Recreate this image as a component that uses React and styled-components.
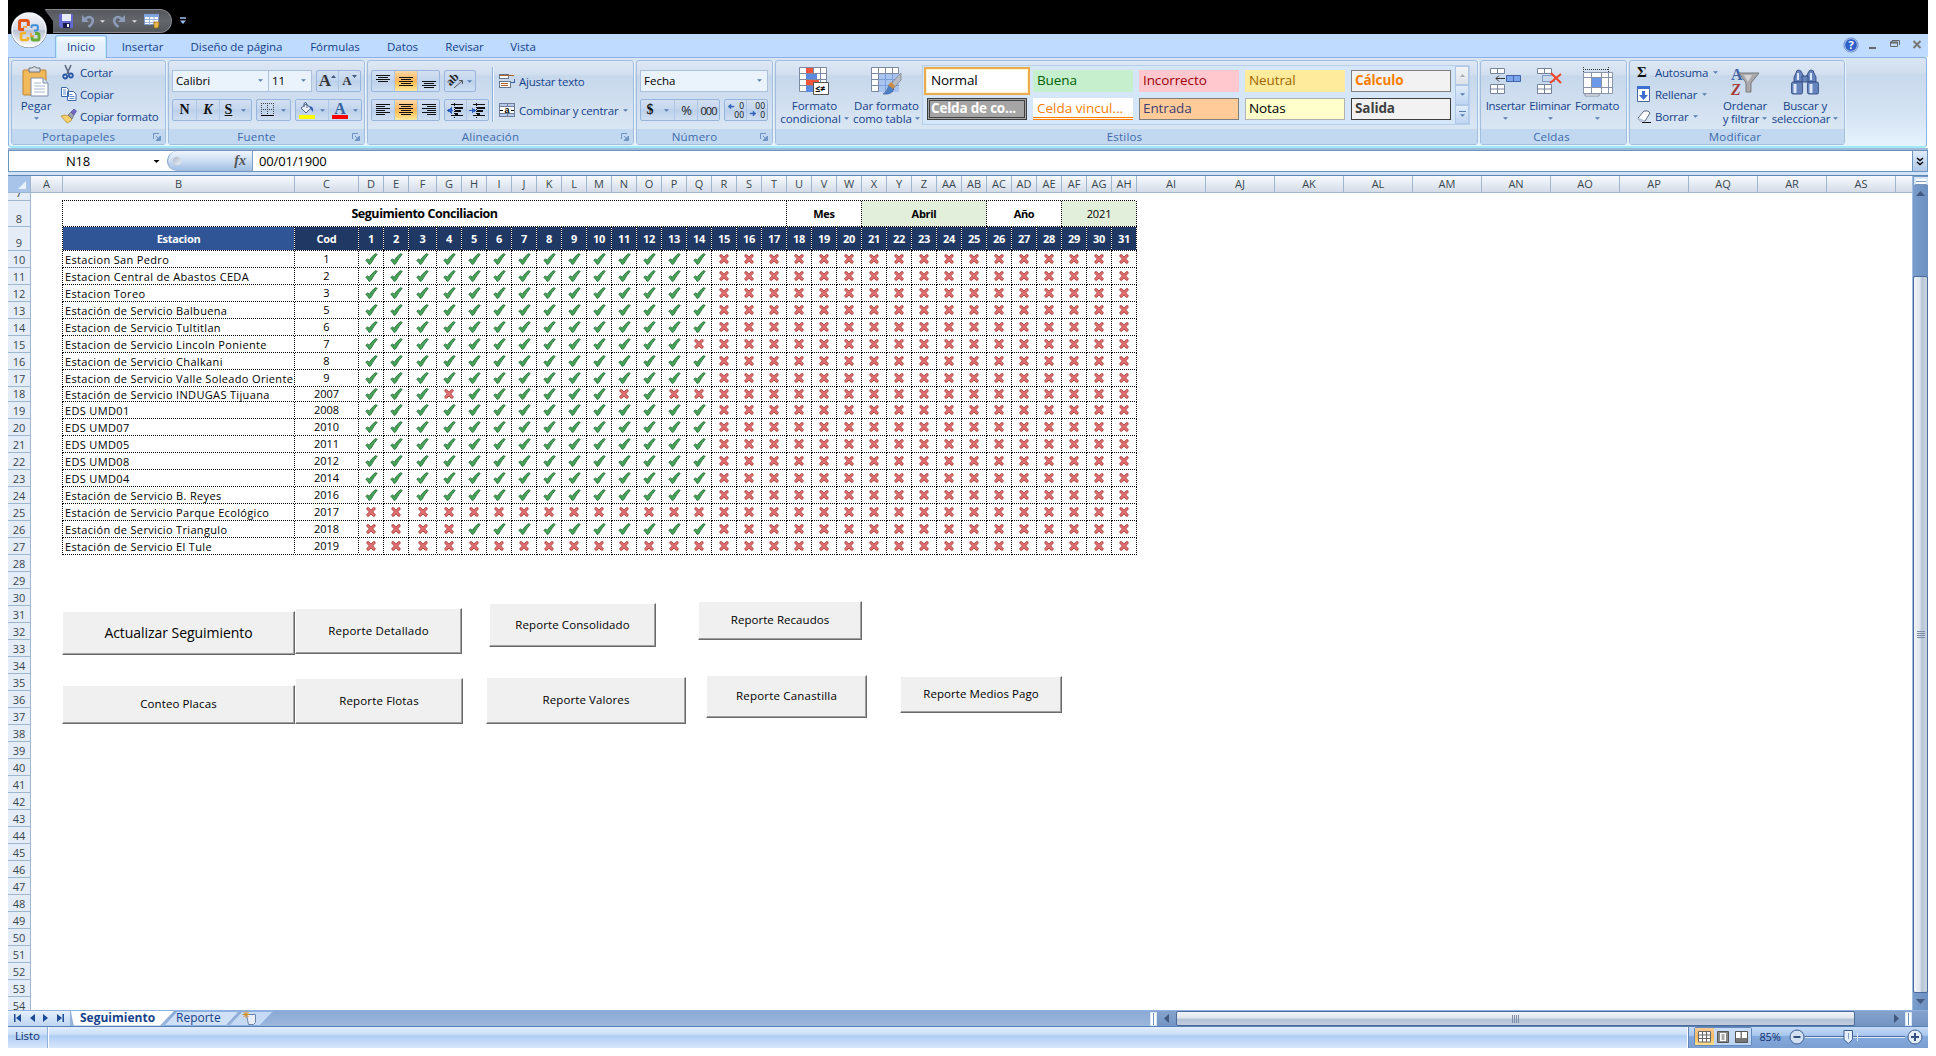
import React from 'react';
import styled, { createGlobalStyle, css } from 'styled-components';

const Global = createGlobalStyle`
  * { box-sizing: border-box; }
  html, body { margin: 0; background: #fff; }
  body { font-family: "Open Sans", "Noto Sans", sans-serif; font-size: 11px; overflow: hidden; }
  svg { overflow: visible; flex: none; }
`;

const NAVY = '#15428b';

/* ---------- window ---------- */
const Window = styled.div`
  position: relative;
  margin-left: 8px;
  width: 1920px;
  height: 1056px;
  display: flex;
  flex-direction: column;
`;
const TitleBar = styled.div`
  height: 34px;
  background: #000;
  display: flex;
  padding: 9px 0 0 36px;
`;
const QuickAccess = styled.div`
  width: 128px;
  height: 24px;
  display: flex;
  align-items: center;
  padding-left: 15px;
  background: linear-gradient(#55585c, #63666a 50%, #54575b);
  border: 1px solid #85888c;
  border-left: none;
  border-radius: 2px 12px 12px 0;
  clip-path: polygon(0 0, 100% 0, 100% 100%, 9px 100%, 9px 12px);
`;
const QatSlot = styled.span`
  display: flex;
  width: ${p => p.$w}px;
`;
const QatMore = styled.span`
  display: flex;
  margin: 8px 0 0 8px;
`;
const Orb = styled.div`
  position: absolute;
  left: 3px;
  top: 11px;
  width: 38px;
  height: 38px;
`;
const TabStrip = styled.div`
  height: 23px;
  background: #bfdbff;
  display: flex;
  align-items: flex-start;
  padding: 1px 6px 0 47px;
`;
const Tab = styled.div`
  width: ${p => p.$w}px;
  height: 22px;
  line-height: 24px;
  text-align: center;
  white-space: nowrap;
  color: ${NAVY};
  font-size: 11.5px;
  letter-spacing: -0.05px;
  ${p => p.$active && css`
    height: 23px;
    background: linear-gradient(#fff, #e6f0fb 30%, #dfebf8);
    border: 1px solid #8db2e3;
    border-bottom: none;
    border-radius: 3px 3px 0 0;
    box-shadow: inset 1px 1px 0 #b9eef8, inset -1px 0 0 #b9eef8;
    line-height: 22px;
    position: relative;
  `}
`;
const WindowButtons = styled.div`
  margin-left: auto;
  display: flex;
`;

/* ---------- ribbon ---------- */
const Ribbon = styled.div`
  height: 91px;
  width: 1919px;
  padding: 2px 2px 2px;
  display: flex;
  gap: 2px;
  border: 1px solid #8db2e3;
  border-bottom: 2px solid #9fe8f5;
  border-radius: 0 3px 4px 4px;
  background: linear-gradient(#dbe6f4, #cfdded 17%, #c9d9ec 19%, #d3e2f3 60%, #e5f3fd);
`;
const GroupBox = styled.section`
  width: ${p => p.$w}px;
  height: 85px;
  flex: none;
  display: flex;
  flex-direction: column;
  border: 1px solid #a3bedd;
  border-radius: 3px;
  box-shadow: 1px 0 0 #e9f3fc;
  background: linear-gradient(#dee8f5, #d2dfef 16%, #c7d8ec 18%, #d8e5f3 78%, #d8e8f6);
`;
const GroupBody = styled.div`
  height: 68px;
  display: flex;
  padding: ${p => p.$pad || '0'};
`;
const GroupFoot = styled.footer`
  height: 15px;
  background: #c1d8f0;
  color: #3e6aaa;
  display: flex;
  align-items: center;
  font-size: 11.5px;
  padding-right: 4px;
`;
const FootLabel = styled.span`
  flex: 1;
  text-align: center;
  letter-spacing: 0.2px;
`;
const LauncherSlot = styled.span`
  display: flex;
  padding-left: 8px;
`;
const Column = styled.div`
  display: flex;
  flex-direction: column;
  flex: none;
  gap: ${p => p.$gap || 0}px;
  width: ${p => p.$w ? p.$w + 'px' : 'auto'};
`;
const Line = styled.div`
  display: flex;
  gap: ${p => p.$gap || 0}px;
`;
const SmallBtn = styled.div`
  height: 22px;
  display: flex;
  align-items: center;
  color: ${NAVY};
  white-space: nowrap;
  letter-spacing: -0.23px;
  font-size: 11.5px;
`;
const IconSlot = styled.span`
  display: flex;
  align-items: center;
  flex: none;
  width: ${p => p.$w || 18}px;
  padding-left: ${p => p.$in || 0}px;
`;
const BigBtn = styled.div`
  width: ${p => p.$w}px;
  height: 67px;
  flex: none;
  display: flex;
  flex-direction: column;
  align-items: center;
  padding-top: 3px;
  color: ${NAVY};
  font-size: 11.5px;
  letter-spacing: ${p => p.$ls || 0}px;
  white-space: nowrap;
`;
const BigIcon = styled.span`
  height: 35px;
  display: flex;
  align-items: center;
`;
const BigLine = styled.span`
  height: 13px;
  line-height: 13px;
  display: flex;
  align-items: center;
`;
const Pill = styled.div`
  display: flex;
  height: 22px;
  border: 1px solid #98b6dd;
  border-radius: 2px;
  background: linear-gradient(#d3e0f1, #c4d6ee 45%, #bcd0ea 50%, #cfdff3);
`;
const FontSizePill = styled(Pill)`
  margin-left: 4px;
`;
const Tool = styled.span`
  width: ${p => p.$w}px;
  display: flex;
  align-items: center;
  justify-content: center;
  gap: ${p => p.$gap || 0}px;
  color: #111;
  & + & { border-left: 1px solid #afc7e6; }
  ${p => p.$on && css`background: linear-gradient(#fcd9a8, #fdb65f 45%, #fdc258 60%, #fee9a0);`}
`;
const Raised = styled.span`
  display: flex;
  align-self: flex-start;
  margin-top: 4px;
`;
const Combo = styled.div`
  width: ${p => p.$w}px;
  height: 22px;
  display: flex;
  align-items: center;
  justify-content: space-between;
  padding: 0 5px 1px 3px;
  color: #000;
  font-size: 11.5px;
  background: #eaf2fb;
  border: 1px solid #abc1de;
  & + & { border-left: none; }
`;
const Glyph = styled.span`
  font-family: "Liberation Serif", serif;
  font-weight: 700;
  font-size: ${p => p.$s || 14}px;
  font-style: ${p => p.$i ? 'italic' : 'normal'};
  text-decoration: ${p => p.$u ? 'underline' : 'none'};
  line-height: 18px;
  color: ${p => p.$c || '#111'};
`;
const Num = styled.span`
  font-size: ${p => p.$s || 12}px;
  letter-spacing: -1px;
  color: #222;
`;
const Rule = styled.div`
  width: 1px;
  height: 55px;
  margin: -3px 6px 0 0;
  background: #8fb2dc;
  box-shadow: 1px 0 0 #eef5fd;
`;
const Gallery = styled.div`
  width: 548px;
  height: 60px;
  margin-top: 4px;
  display: flex;
  justify-content: space-between;
  border: 1px solid #b9d0ed;
  background: #d4e6f8;
`;
const Swatches = styled.div`
  display: grid;
  grid-template-columns: repeat(5, 100px);
  grid-template-rows: 22px 22px;
  gap: 6px;
  padding: 4px 0 0 4px;
`;
const Swatch = styled.div`
  padding-left: 4px;
  font-size: 13.5px;
  line-height: 21px;
  white-space: nowrap;
  letter-spacing: -0.1px;
  color: ${p => p.$c || '#000'};
  background: ${p => p.$bg || '#fff'};
  font-weight: ${p => p.$b ? 700 : 400};
  ${p => p.$line && css`border: 1px solid ${p.$line}; line-height: 19px; padding-left: 3px;`}
  ${p => p.$check && css`
    border: 1px solid #3f3f3f; line-height: 19px; padding-left: 3px; letter-spacing: -0.2px;
    box-shadow: inset 0 0 0 1px #a5a5a5, inset 0 0 0 2px #3f3f3f;
  `}
  ${p => p.$linked && css`border-bottom: 3px double #ff8001; letter-spacing: 0;`}
  ${p => p.$sel && css`outline: 2px solid #edab4c; outline-offset: 1px; box-shadow: 0 0 0 1px #fff3cf;`}
`;
const GalleryScroll = styled.div`
  width: 14px;
  display: flex;
  flex-direction: column;
`;
const GalleryStep = styled.span`
  flex: 1;
  display: flex;
  flex-direction: column;
  align-items: center;
  justify-content: center;
  gap: 2px;
  border: 1px solid #b0c8e8;
  background: ${p => p.$off ? 'linear-gradient(#f2f4f6,#dfe3e8)' : 'linear-gradient(#dfecfb,#bfd5f1)'};
`;

/* ---------- formula bar ---------- */
const FormulaWrap = styled.div`
  height: 27px;
  background: #d3e3f6;
  border-top: 2px solid #9fb9da;
`;
const FormulaBar = styled.div`
  height: 22px;
  display: flex;
  border: 1px solid #6d94bd;
  background: #fff;
  color: #000;
`;
const NameBox = styled.div`
  width: 158px;
  display: flex;
  align-items: center;
  gap: 6px;
  font-size: 13px;
  letter-spacing: -0.3px;
`;
const NameText = styled.span`
  width: 138px;
  text-align: center;
`;
const FxPill = styled.div`
  width: 86px;
  display: flex;
  align-items: center;
  justify-content: space-between;
  padding: 0 6px 0 5px;
  border: 1px solid #7d9fc8;
  border-width: 0 1px 0 1px;
  border-radius: 10px 0 0 10px;
  background: linear-gradient(#f0f5fc, #cbdcf2 50%, #9fbce0);
`;
const FxDot = styled.span`
  width: 8px;
  height: 8px;
  border-radius: 50%;
  background: linear-gradient(135deg, #a8b4c4, #eef2f7);
`;
const FormulaText = styled.div`
  flex: 1;
  padding-left: 6px;
  line-height: 20px;
  font-size: 13px;
  letter-spacing: -0.15px;
`;
const ExpandBtn = styled.div`
  width: 15px;
  border-left: 1px solid #6d94bd;
  display: flex;
  align-items: center;
  justify-content: center;
  background: linear-gradient(#dfebfa, #b0c9e8);
`;

/* ---------- sheet ---------- */
const Work = styled.div`
  height: 835px;
  display: flex;
  border-top: 1px solid #5e87b5;
`;
const Sheet = styled.div`
  position: relative;
  width: 1904px;
  height: 834px;
  overflow: hidden;
  background: #fff;
`;
const HeadRow = styled.div`
  height: 17px;
  display: flex;
  border-bottom: 1px solid #9eb6ce;
  background: linear-gradient(#f7fafd, #e4eaf2 55%, #d3dbe6);
`;
const Corner = styled.div`
  width: 23px;
  background: #a9c4e9;
  border-right: 1px solid #9eb6ce;
  display: flex;
  align-items: flex-end;
  justify-content: flex-end;
  padding: 0 4px 3px 0;
`;
const ColHead = styled.div`
  width: ${p => p.$w}px;
  flex: none;
  border-right: 1px solid #9eb6ce;
  text-align: center;
  line-height: 16px;
  font-size: 11px;
  color: #39474f;
`;
const Row = styled.div`
  height: ${p => p.$h}px;
  display: flex;
`;
const RowHead = styled.div`
  width: 23px;
  flex: none;
  display: flex;
  align-items: flex-end;
  justify-content: center;
  background: #e4ecf7;
  border-right: 1px solid #9eb6ce;
  border-bottom: 1px solid #9eb6ce;
  color: #39474f;
  font-size: 11px;
  line-height: 15px;
  overflow: hidden;
`;
const dotsX = 'repeating-linear-gradient(90deg, #000 0 1px, #fff 1px 2px)';
const dotsY = 'repeating-linear-gradient(180deg, #000 0 1px, #fff 1px 2px)';
const Cell = styled.div`
  width: ${p => p.$w}px;
  flex: none;
  height: 100%;
  padding: 0 1px 1px 0;
  display: flex;
  align-items: center;
  justify-content: center;
  overflow: hidden;
  white-space: nowrap;
  font-size: ${p => p.$s || 11}px;
  font-weight: ${p => p.$b ? 700 : 400};
  letter-spacing: ${p => p.$ls || 0}px;
  color: ${p => p.$c || '#000'};
  background:
    ${dotsX} 0 100% / 100% 1px no-repeat,
    ${dotsY} 100% 0 / 1px 100% no-repeat,
    ${p => p.$bg || '#fff'};
`;
const BodyCell = styled(Cell)`
  padding-bottom: 2px;
  line-height: 13px;
`;
const NameCell = styled(Cell)`
  justify-content: flex-start;
  padding: 0 1px 0 2px;
  line-height: 14px;
  letter-spacing: 0.34px;
`;
const HeadCell = styled(Cell)`
  font-weight: 700;
  letter-spacing: -0.3px;
  color: #fff;
`;
const Spacer = styled.div`
  width: 32px;
  flex: none;
  background: ${dotsY} 100% 0 / 1px 100% no-repeat, #fff;
`;
const TopEdge = styled.div`
  width: 1074px;
  margin-left: 31px;
  background: ${dotsX} 0 100% / 100% 1px no-repeat;
`;
const SheetButton = styled.button`
  position: absolute;
  left: ${p => p.$x}px;
  top: ${p => p.$y}px;
  width: ${p => p.$w}px;
  height: ${p => p.$h}px;
  padding: 0 0 2px;
  background: #f0f0f0;
  border: 1px solid;
  border-color: #fff #696969 #696969 #fff;
  box-shadow: inset -1px -1px 0 #a0a0a0;
  font-family: inherit;
  font-size: ${p => p.$s || 11.5}px;
  letter-spacing: ${p => p.$ls || 0}px;
  color: #000;
  white-space: nowrap;
`;

/* ---------- scroll bars and footer ---------- */
const VScroll = styled.div`
  width: 16px;
  height: 834px;
  display: flex;
  flex-direction: column;
  align-items: center;
  border-left: 1px solid #9ebbe0;
  background: linear-gradient(90deg, #7b9dcb, #6c90c1);
`;
const SplitV = styled.div`
  width: 14px;
  height: 8px;
  margin-top: 1px;
  border: 2px solid #d6e5f8;
  background: #fff;
  border-bottom: 1px solid #7796bf;
  box-shadow: inset 0 -2px 0 #fff, inset 0 -3px 0 #7d9cc4;
`;
const ArrowBoxV = styled.div`
  height: ${p => p.$h}px;
  display: flex;
  align-items: center;
`;
const ThumbV = styled.div`
  width: 15px;
  height: 717px;
  margin-top: 75px;
  border: 1px solid #4a6a9b;
  border-radius: 2px;
  background: linear-gradient(90deg, #f2f5f9, #dfe5ed 45%, #b5c3d6 60%, #ccd6e3);
  display: flex;
  align-items: center;
  justify-content: center;
`;
const Bottom = styled.div`
  height: 16px;
  display: flex;
  background: linear-gradient(#8aa9d6, #9db7dc);
  border-top: 1px solid #8fb1df;
`;
const NavButtons = styled.div`
  width: 63px;
  display: flex;
  align-items: center;
  justify-content: space-between;
  padding: 0 6px 2px;
  background: linear-gradient(#e5effc, #bed5f2);
  border-right: 1px solid #8fb1df;
`;
const SheetTabs = styled.div`
  flex: 1;
  position: relative;
  display: flex;
`;
const TabShape = styled.svg`
  position: absolute;
  left: 0;
  top: 0;
`;
const SheetTab = styled.span`
  position: relative;
  width: ${p => p.$w}px;
  margin-left: ${p => p.$ml || 0}px;
  color: ${NAVY};
  font-size: 12px;
  line-height: 14px;
  white-space: nowrap;
  font-weight: ${p => p.$b ? 700 : 400};
`;
const HScroll = styled.div`
  width: 778px;
  display: flex;
  align-items: center;
  background: linear-gradient(#84a2cc, #7495c4);
`;
const SplitH = styled.div`
  width: 7px;
  height: 14px;
  border: 1px solid #d6e5f8;
  background: #fff;
  box-shadow: inset 2px 0 0 #fff, inset 3px 0 0 #6f90bd;
`;
const ArrowBoxH = styled.div`
  width: ${p => p.$w}px;
  display: flex;
  justify-content: ${p => p.$end ? 'flex-end' : 'center'};
  padding-right: ${p => p.$end ? 6 : 0}px;
`;
const ThumbH = styled.div`
  width: 679px;
  height: 15px;
  border: 1px solid #4a6a9b;
  border-radius: 2px;
  background: linear-gradient(#f2f5f9, #dfe5ed 45%, #b2c1d5 58%, #c3cfdf);
  display: flex;
  align-items: center;
  justify-content: center;
`;
const StatusBar = styled.div`
  height: 22px;
  display: flex;
  border-top: 1px solid #5880b4;
  background: linear-gradient(#e1edfc, #cbdff8 35%, #adcdf4 42%, #c6dcf7 75%, #d8e7fa);
  color: ${NAVY};
`;
const StatusText = styled.div`
  width: 40px;
  padding-left: 7px;
  line-height: 18px;
  font-size: 11.5px;
  letter-spacing: -0.15px;
  color: #10306e;
  border-right: 1px solid #8fb1df;
  box-shadow: 1px 0 0 #fff;
`;
const StatusRight = styled.div`
  width: 240px;
  margin-left: auto;
  display: flex;
  align-items: center;
  padding: 0 0 2px 5px;
  border-left: 1px solid #5f86bb;
  box-shadow: -1px 0 0 #fff;
  background: linear-gradient(#c5dbf6, #a8c6ee 40%, #84a9dc 45%, #7c9fd1);
`;
const ViewGroup = styled.div`
  width: 58px;
  height: 19px;
  display: flex;
  border: 1px solid #6489c0;
  border-radius: 2px;
`;
const View = styled.span`
  flex: 1;
  display: flex;
  align-items: center;
  justify-content: center;
  background: ${p => p.$on ? 'linear-gradient(#f8cd98, #f8b861 50%, #fee08a)' : 'linear-gradient(#c9dcf5, #bdd4f2)'};
`;
const ZoomText = styled.span`
  width: 36px;
  text-align: center;
  font-size: 11px;
  color: #10306e;
  letter-spacing: -0.2px;
`;

/* ---------- drawings ---------- */
const Down = ({ c = '#567db1', w = 5 }) => (
  <svg width={w} height="3" viewBox="0 0 6 3"><path d="M0 0h6L3 3z" fill={c} /></svg>
);
const DropSlot = styled.span`
  display: flex;
  margin-left: ${p => p.$ml ?? 5}px;
`;
const Drop = ({ ml }) => <DropSlot $ml={ml}><Down /></DropSlot>;
const Launcher = () => (
  <svg width="8" height="8" viewBox="0 0 8 8"><path d="M.5 6V.5H6" stroke="#6d94c4" fill="none" /><path d="M3 3l2 2M7.500 3v4.500H3z" stroke="#6d94c4" fill="#6d94c4" /></svg>
);
const Check = () => (
  <svg width="13" height="12" viewBox="0 0 13 12"><path d="M.8 7.200 2.600 5.900 4.200 7.300Q7 3 10.400.7L12.200 1.300Q8.600 5.500 5.900 10.600L4.200 11.500Q2.600 8.900.8 7.200Z" fill="#46a457" stroke="#2c7040" strokeWidth=".9" /></svg>
);
const Cross = () => (
  <svg width="10" height="10" viewBox="0 0 10 10"><path d="M1 .8 2.800.7 5 3.100 7.200.7 9 .8 9.200 2.200 6.700 4.900 9.300 7.600 8.600 9.200 7 9.200 5 6.900 3 9.200 1.400 9.200 .7 7.600 3.300 4.900.8 2.200Z" fill="#e27072" stroke="#a9453f" strokeWidth=".9" /></svg>
);
const Bars = ({ rows, y0 = 0 }) => (
  <svg width="16" height="16" viewBox="0 0 16 16">{rows.map(([x, w], i) => <rect key={i} x={x} y={y0 + i * 2} width={w} height="1" fill="#111" shapeRendering="crispEdges" />)}</svg>
);
const Indent = ({ right }) => (
  <svg width="17" height="15" viewBox="0 0 17 15" shapeRendering="crispEdges">
    <path d="M4 1.500h12M4 12.500h12" stroke="#111" /><path d="M8 4.500h8M8 7.500h6M8 10.500h3" stroke="#111" strokeWidth="2" />
    <path d="M7.500 0v15" stroke="#111" strokeDasharray="1 1" />
    <path d={right ? 'M0 7.500h4M3 5l3 2.500L3 10z' : 'M6 7.500H3M4 5L1 7.500 4 10z'} stroke="#2f62c0" fill="#2f62c0" />
  </svg>
);
const Paste = () => (
  <svg width="28" height="31" viewBox="0 0 28 31">
    <rect x="1" y="4" width="23" height="25" rx="1" fill="#f2b95a" stroke="#c08430" />
    <path d="M7 2h3q2-3 5 0h3v4H7z" fill="#d9dde3" stroke="#6b7480" />
    <path d="M9 12h12l5 5v13H9z" fill="#fff" stroke="#7d8da8" /><path d="M21 12v5h5" fill="#dbe4f0" stroke="#7d8da8" />
    <path d="M12 17h7M12 20h11M12 23h11M12 26h11" stroke="#a9b9d3" />
  </svg>
);
const Cut = () => (
  <svg width="12" height="15" viewBox="0 0 12 15"><path d="M3 0l4 9M9 0L5 9" stroke="#5f6b80" strokeWidth="1.600" /><circle cx="3.200" cy="11.500" r="2" fill="none" stroke="#2c57a4" strokeWidth="1.800" /><circle cx="8.800" cy="10.500" r="2" fill="none" stroke="#2c57a4" strokeWidth="1.800" /></svg>
);
const Copy = () => (
  <svg width="16" height="14" viewBox="0 0 16 14"><path d="M.5.500h5l2 2v7h-7zM6.500 4.500h6l2.500 2.500v6.500H6.500z" fill="#fff" stroke="#3d66ab" /><path d="M2 3h3M2 5h3M2 7h3M8.500 7.500h3M8.500 9.500h5M8.500 11.500h5" stroke="#5c8ad0" /></svg>
);
const Brush = () => (
  <svg width="16" height="15" viewBox="0 0 16 15"><path d="M0 7l4-1 4 1 3 2-1 3-4 2z" fill="#f4cf6d" stroke="#b88b2c" strokeWidth=".7" /><path d="M7 6l3-3 3 3-2 4z" fill="#9aa3b2" stroke="#555" strokeWidth=".6" /><path d="M10 3l3-3 2.500 2L13 6z" fill="#7468c8" stroke="#4a3f90" strokeWidth=".6" /></svg>
);
const Save = () => (
  <svg width="14" height="14" viewBox="0 0 14 14"><path d="M0 0h14v14H2L0 12z" fill="#6568cf" /><path d="M3 0h9v7H3z" fill="#e8ecfa" /><path d="M4 9h7v5H4z" fill="#1a1c4a" /><path d="M8 10h2v3H8z" fill="#fff" /></svg>
);
const Undo = ({ flip }) => (
  <svg width="14" height="14" viewBox="0 0 14 14"><g transform={flip ? 'translate(14 0) scale(-1 1)' : undefined}><path d="M1 1v7h7z" fill="#8b9bb9" /><path d="M4 5q5-4 7.500 0Q13 9 7.500 13" fill="none" stroke="#8b9bb9" strokeWidth="2.600" /></g></svg>
);
const FormIcon = () => (
  <svg width="16" height="15" viewBox="0 0 16 15"><path d="M.5.500h14v10H.5z" fill="#fff" stroke="#7b98c8" /><path d="M0 0h15v3H0z" fill="#7ea3dd" /><path d="M1 5.500h13M1 8.500h13M5.500 3v8M10 3v8" stroke="#9bb5dd" /><path d="M10 8h5v3l-1 3h-4z" fill="#e9b848" stroke="#8a6114" strokeWidth=".7" /></svg>
);
const OrbArt = () => (
  <svg width="38" height="38" viewBox="0 0 38 38">
    <defs>
      <linearGradient id="orb" x1="0" y1="0" x2="0" y2="1"><stop offset="0" stopColor="#f3f5f9" /><stop offset=".48" stopColor="#d3d9e5" /><stop offset=".52" stopColor="#b9c2d4" /><stop offset="1" stopColor="#fff" /></linearGradient>
    </defs>
    <circle cx="18" cy="19" r="18" fill="#5d6b82" /><circle cx="18" cy="19" r="17" fill="url(#orb)" stroke="#fff" strokeWidth="1.200" />
    <g fill="none">
      <path d="M13 18.500H9.500Q8.500 18.500 8.500 17.500V11Q8.500 9.500 10 9.500H15.500Q17.300 9.500 17.300 11V15" stroke="#e3541b" strokeWidth="3" />
      <path d="M20.500 17v-1.500q0-1.300 1.300-1.300h3.700q1.300 0 1.300 1.300v3q0 1-1.300 1H23" stroke="#3c8ed8" strokeWidth="2" />
      <path d="M17 26v2q0 1-1 1h-4.500q-1.500 0-1.500-1.500v-4q0-1.500 1.500-1.500H15" stroke="#f3b42c" strokeWidth="2.600" />
      <path d="M24 22.500h2.500q1.500 0 1.500 1.500v3.500q0 1.500-1.500 1.500h-4q-1.500 0-1.500-1.500V25" stroke="#6aab38" strokeWidth="2.800" />
      <path d="M12 16h4M20 22v3h3" stroke="#f09a3c" strokeWidth="1.600" />
    </g>
  </svg>
);
const Bucket = () => (
  <svg width="16" height="17" viewBox="0 0 16 17"><path d="M2 6l5-4 5 4-5 5z" fill="#e9eef7" stroke="#4d648e" /><path d="M5 5V1.500Q7-1 8 2v4" fill="none" stroke="#4d648e" /><path d="M10 4q5 0 4 6-2-2-3-4z" fill="#2f62b4" /><path d="M0 13h16v4H0z" fill="#ff0" /></svg>
);
const FontColor = () => (
  <svg width="16" height="17" viewBox="0 0 16 17"><text x="8" y="12" textAnchor="middle" fontFamily="Liberation Serif" fontWeight="700" fontSize="16" fill="#37639f">A</text><path d="M0 13h16v4H0z" fill="#f00" /></svg>
);
const BorderIcon = () => (
  <svg width="13" height="14" viewBox="0 0 13 14" shapeRendering="crispEdges"><path d="M0 .5h13M0 6.500h13M.5 0v12M6.500 0v12M12.500 0v12" stroke="#444" strokeDasharray="1 1" /><path d="M0 12.500h13" stroke="#000" /></svg>
);
const Orient = () => (
  <svg width="15" height="15" viewBox="0 0 15 15"><text x="0" y="9" transform="rotate(-45 5 9)" fontFamily="Liberation Serif" fontWeight="700" fontSize="12" fill="#222">ab</text><path d="M5 14l8-7M10 6.500h3.500V10" stroke="#555" fill="none" /></svg>
);
const Wrap = () => (
  <svg width="16" height="16" viewBox="0 0 16 16" shapeRendering="crispEdges"><path d="M.5 1h9v4h-9zM.5 8h11v6.500H.5z" fill="#fff" stroke="#66758c" /><path d="M1 2.500h14M2 10.500h7M2 12.500h7" stroke="#b0642c" /><path d="M15 6v3h-3" stroke="#3a62a8" fill="none" /></svg>
);
const Merge = () => (
  <svg width="16" height="15" viewBox="0 0 16 15" shapeRendering="crispEdges"><path d="M.5.500h15v13H.5z" fill="#fff" stroke="#6d7f9d" /><path d="M1 1h14v2H1zM1 11h14v2H1z" fill="#b7cbe8" /><path d="M1 3.500h14M1 10.500h14M8 1v2M8 11v2" stroke="#6d7f9d" /><text x="8" y="10" textAnchor="middle" fontFamily="Liberation Sans" fontWeight="700" fontSize="9">a</text><path d="M1 7.500h3M12 7.500h3" stroke="#000" /></svg>
);
const Decimal = ({ more }) => (
  <svg width="18" height="18" viewBox="0 0 18 18">
    <g fontFamily="Open Sans" fontSize="8.500" fill="#111" textAnchor="end">
      <text x="17" y="8">{more ? '0' : '00'}</text><text x="17" y="16.500">{more ? '00' : '0'}</text>
    </g>
    <path d={more ? 'M1 5.500L4 3v2h3v1H4v2z' : 'M8 12.500L5 10v2H2v1h3v2z'} fill="#3566bd" stroke="#3566bd" strokeWidth=".5" />
  </svg>
);
const gridLines = 'M.5.500h27v24H.5zM.5 6.500h27M.5 12.500h27M.5 18.500h27M7.500.500v24M14.500.500v24M21.500.500v24';
const CondIcon = () => (
  <svg width="31" height="29" viewBox="0 0 31 29"><path d={gridLines} fill="#fff" stroke="#7c89a0" /><path d="M7 1h7v5H7zM7 13h13v5H7z" fill="#f0543c" /><path d="M7 7h11v5H7zM7 19h7v6H7z" fill="#5b8be0" /><path d="M14.500 15.500h15v12h-15z" fill="#fff" stroke="#555" /><text x="16" y="25" fontFamily="Open Sans" fontWeight="700" fontSize="9">≤≠</text></svg>
);
const TableIcon = () => (
  <svg width="31" height="29" viewBox="0 0 31 29"><path d={gridLines} fill="#fff" stroke="#7c89a0" /><path d="M8 7h20v18H8z" fill="#a9c4ee" /><path d="M8 12.500h20M8 18.500h20M14.500 7v18M21.500 7v18" stroke="#7ba0dc" /><path d="M30 6v7l-8 9-4-3z" fill="#b8bcc4" stroke="#6b6b72" strokeWidth=".6" /><path d="M18 18l5 4q-2 6-11 5 4-2 6-9z" fill="#4d7fc9" stroke="#365a94" strokeWidth=".6" /><path d="M17 18l3-3 4 4-2 3z" fill="#c98b44" /></svg>
);
const cellPairs = 'M.5.500h14v5H.5zM.5 16.500h14v9H.5zM7.500.500v5M7.500 16.500v9M.5 21h14';
const InsertIcon = () => (
  <svg width="31" height="27" viewBox="0 0 31 27"><path d={cellPairs} fill="#fff" stroke="#74829a" /><path d="M16.500 7.500h14v6h-14zM23.500 7.500v6" fill="#7ba6ee" stroke="#4464a8" /><path d="M6 10.500h9M9 7.500l-3 3 3 3" stroke="#333" fill="none" /></svg>
);
const DeleteIcon = () => (
  <svg width="26" height="27" viewBox="0 0 26 27"><path d={cellPairs} fill="#fff" stroke="#74829a" /><path d="M5.500 7.500h12v6h-12z" fill="none" stroke="#3a56a0" strokeDasharray="1 1" /><path d="M14 5l10 10M24 6L13 15" stroke="#ee4524" strokeWidth="2" /></svg>
);
const FormatIcon = () => (
  <svg width="31" height="30" viewBox="0 0 31 30"><path d="M1 2.500h25M1.500 0v5M26.500 0v5" stroke="#333" strokeDasharray="1 1" /><path d="M1.500 5.500h29v21h-29zM1.500 10.500h29M1.500 20.500h29M9.500 5.500v21M19.500 5.500v21M26.500 5.500v21" fill="#fff" stroke="#8a94a8" /><path d="M10 11h9v9h-9z" fill="#6c98ea" /><path d="M3 27h14v2H3z" fill="#fff" stroke="#8a94a8" /></svg>
);
const Fill = () => (
  <svg width="13" height="16" viewBox="0 0 13 16"><path d="M.5.500h12v15H.5z" fill="#fff" stroke="#4a67a5" /><path d="M0 0h13v3H0z" fill="#3d6fd2" /><path d="M5 5h3v4h3l-4.500 5L2 9h3z" fill="#3d6fd2" /></svg>
);
const Eraser = () => (
  <svg width="14" height="13" viewBox="0 0 14 13"><path d="M1 8l6-7 4 0 2 2-5 8H3z" fill="#fff" stroke="#5e6b83" /><path d="M1 8l4 1 3 2-1 1H3z" fill="#b9c6da" /><path d="M5 12.500h9" stroke="#111" /></svg>
);
const SortIcon = () => (
  <svg width="31" height="30" viewBox="0 0 31 30"><g fontFamily="Liberation Serif" fontWeight="700" fontSize="16"><text x="1" y="13" fill="#3c62a8">A</text><text x="1" y="28" fill="#a63d3a" fontStyle="italic">Z</text></g><path d="M9 6h20L21 16v9h-5v-9z" fill="#a9a9ab" stroke="#7a7a7c" /><path d="M14 8h8l-4 7z" fill="#d4d4d6" /></svg>
);
const FindIcon = () => (
  <svg width="28" height="26" viewBox="0 0 28 26"><g fill="#6583bd" stroke="#2c4478" strokeWidth=".8"><path d="M5 4q0-3 3-3 2 0 3 3l1.500 3v6H3V8zM17 4q1-3 3-3 3 0 3 3l2 4v5h-9.500V7z" /><path d="M11 7h6v6h-6z" /><rect x=".5" y="13" width="11" height="12" rx="1.500" /><rect x="16.500" y="13" width="11" height="12" rx="1.500" /></g><path d="M2.500 15h3v9h-3zM18.500 15h3v9h-3zM6 4h2v7H6zM19 4h2v7h-2z" fill="#dbe6f8" /></svg>
);
const HelpIcons = () => (
  <svg width="80" height="18" viewBox="0 0 80 18"><circle cx="9" cy="10" r="6.500" fill="#2f62c9" stroke="#fff" /><circle cx="9" cy="10" r="7" fill="none" stroke="#2b56b0" strokeWidth=".7" /><text x="9" y="14" textAnchor="middle" fontFamily="Open Sans" fontWeight="700" fontSize="11" fill="#fff">?</text><path d="M27 13h7" stroke="#666" strokeWidth="2" /><path d="M48.500 7.500h7v4h-7zM50 7V5.500h7.500V10" fill="none" stroke="#666" /><path d="M48 7.500h8" stroke="#666" strokeWidth="2" /><path d="M71.500 6l7 7M78.500 6l-7 7" stroke="#777" strokeWidth="2" /></svg>
);
const Grip = ({ v }) => (
  <svg width="8" height="8" viewBox="0 0 8 8" shapeRendering="crispEdges"><path d={v ? 'M0 .5h8M0 2.500h8M0 4.500h8M0 6.500h8' : 'M.5 0v8M2.500 0v8M4.500 0v8M6.500 0v8'} stroke="#7d8da6" /></svg>
);
const Tri = ({ d, w = 9, h = 5, c = '#41597f' }) => <svg width={w} height={h} viewBox={`0 0 ${w} ${h}`}><path d={d} fill={c} /></svg>;
const Zoomer = () => (
  <svg width="132" height="20" viewBox="0 0 132 20">
    <path d="M17 10.500h100" stroke="#dfeafa" /><path d="M17 9.500h100" stroke="#4d6fa6" /><path d="M69.500 6v8" stroke="#dfeafa" />
    <circle cx="9" cy="10" r="7" fill="#d3e0f2" stroke="#3f5f92" /><path d="M5.500 10h7" stroke="#33507e" strokeWidth="2" />
    <circle cx="127" cy="10" r="7" fill="#e4edf9" stroke="#3f5f92" /><path d="M123 10h8M127 6v8" stroke="#33507e" strokeWidth="2" />
    <path d="M56 3.500h8.500v9l-4.250 4-4.250-4z" fill="#e8f0fb" stroke="#3f5f92" /><path d="M60.500 6v6" stroke="#89a2c8" />
  </svg>
);

/* ---------- data ---------- */
const columns = [['A', 32], ['B', 232], ['C', 64], ['D', 25], ['E', 25], ['F', 28], ['G', 25],
  ...'H I J K L M N O P Q R S T U V W X Y Z AA AB AC AD AE AF AG AH'.split(' ').map(n => [n, 25]),
  ...'AI AJ AK AL AM AN AO AP AQ AR AS'.split(' ').map(n => [n, 69])];
const dayWidths = columns.slice(3, 34).map(c => c[1]);
const allDays = Array.from({ length: 14 }, (_, i) => i + 1);
// name, code, days without reconciliation among the first fourteen
const stations = [
  ['Estacion San Pedro', 1], ['Estacion Central de Abastos CEDA', 2], ['Estacion Toreo', 3],
  ['Estación de Servicio Balbuena', 5], ['Estacion de Servicio Tultitlan', 6],
  ['Estacion de Servicio Lincoln Poniente', 7, [14]], ['Estacion de Servicio Chalkani', 8],
  ['Estacion de Servicio Valle Soleado Oriente', 9], ['Estación de Servicio INDUGAS Tijuana', 2007, [4, 11, 13, 14]],
  ['EDS UMD01', 2008], ['EDS UMD07', 2010], ['EDS UMD05', 2011], ['EDS UMD08', 2012], ['EDS UMD04', 2014],
  ['Estación de Servicio B. Reyes', 2016], ['Estación de Servicio Parque Ecológico', 2017, allDays],
  ['Estación de Servicio Triangulo', 2018, [1, 2, 3, 4]], ['Estación de Servicio El Tule', 2019, allDays],
];
// label, x, y, width, height, font size, letter spacing
const buttons = [
  ['Actualizar Seguimiento', 54, 435, 233, 44, 14, -0.05], ['Reporte Detallado', 287, 432, 167, 46, 11.5, 0.2],
  ['Reporte Consolidado', 481, 427, 167, 44, 11.5, 0.1], ['Reporte Recaudos', 690, 425, 164, 39, 11.5, 0.05],
  ['Conteo Placas', 54, 509, 233, 39, 11.5, 0.1], ['Reporte Flotas', 287, 502, 168, 46, 11.5, 0.15],
  ['Reporte Valores', 478, 501, 200, 47, 11.5, 0.1], ['Reporte Canastilla', 698, 499, 161, 43, 11.5, 0.2],
  ['Reporte Medios Pago', 892, 500, 162, 37, 11.5, 0.05],
];

const Group = ({ w, label, pad, launch, children }) => (
  <GroupBox $w={w}>
    <GroupBody $pad={pad}>{children}</GroupBody>
    <GroupFoot><FootLabel>{label}</FootLabel>{launch && <LauncherSlot><Launcher /></LauncherSlot>}</GroupFoot>
  </GroupBox>
);
const Big = ({ w, icon, a, b, ls }) => (
  <BigBtn $w={w} $ls={ls}><BigIcon>{icon}</BigIcon><BigLine>{a}</BigLine>
    {b ? <BigLine>{b}<Drop ml={3} /></BigLine> : <BigLine><Down /></BigLine>}</BigBtn>
);
const W = [1, 14];
const N = [3, 10];
const L = [1, 9];
const R = [6, 9];

export default function App() {
  return (
    <>
      <Global />
      <Window>
        <TitleBar>
          <QuickAccess>
            <QatSlot $w={22}><Save /></QatSlot><QatSlot $w={19}><Undo /></QatSlot><QatSlot $w={12}><Down c="#ddd" /></QatSlot>
            <QatSlot $w={20}><Undo flip /></QatSlot><QatSlot $w={12}><Down c="#ddd" /></QatSlot><QatSlot $w={18}><FormIcon /></QatSlot>
          </QuickAccess>
          <QatMore><svg width="6" height="8" viewBox="0 0 6 8"><path d="M0 1h6" stroke="#9cc0f0" strokeWidth="1.500" /><path d="M0 3.500h6L3 7z" fill="#9cc0f0" /></svg></QatMore>
        </TitleBar>
        <TabStrip>
          <Tab $w={52} $active>Inicio</Tab><Tab $w={71}>Insertar</Tab><Tab $w={117}>Diseño de página</Tab>
          <Tab $w={80}>Fórmulas</Tab><Tab $w={55}>Datos</Tab><Tab $w={69}>Revisar</Tab><Tab $w={48}>Vista</Tab>
          <WindowButtons><HelpIcons /></WindowButtons>
        </TabStrip>
        <Ribbon>
          <Group w={155} label="Portapapeles" pad="0 0 0 5px" launch>
            <Big w={38} icon={<Paste />} a="Pegar" />
            <Column>
              <SmallBtn><IconSlot $w={25} $in={7}><Cut /></IconSlot>Cortar</SmallBtn>
              <SmallBtn><IconSlot $w={25} $in={6}><Copy /></IconSlot>Copiar</SmallBtn>
              <SmallBtn><IconSlot $w={25} $in={6}><Brush /></IconSlot>Copiar formato</SmallBtn>
            </Column>
          </Group>
          <Group w={197} label="Fuente" pad="9px 0 0 3px" launch>
            <Column $gap={7}>
              <Line>
                <Combo $w={97}>Calibri<Down /></Combo><Combo $w={43}>11<Down /></Combo>
                <FontSizePill>
                  <Tool $w={21}><Glyph $s={17} $c="#333">A</Glyph><Raised><Tri d="M0 3L2.500 0 5 3z" w={5} h={3} /></Raised></Tool>
                  <Tool $w={22}><Glyph $s={13} $c="#333">A</Glyph><Raised><Tri d="M0 0h5L2.500 3z" w={5} h={3} /></Raised></Tool>
                </FontSizePill>
              </Line>
              <Line $gap={4}>
                <Pill><Tool $w={23}><Glyph>N</Glyph></Tool><Tool $w={23}><Glyph $i>K</Glyph></Tool><Tool $w={32} $gap={9}><Glyph $u>S</Glyph><Down /></Tool></Pill>
                <Pill><Tool $w={33} $gap={7}><BorderIcon /><Down /></Tool></Pill>
                <Pill><Tool $w={32} $gap={5}><Bucket /><Down /></Tool><Tool $w={33} $gap={5}><FontColor /><Down /></Tool></Pill>
              </Line>
            </Column>
          </Group>
          <Group w={267} label="Alineación" pad="9px 0 0 3px" launch>
            <Column $gap={7} $w={121}>
              <Line $gap={4}>
                <Pill><Tool $w={22}><Bars rows={[W, N, W, N]} y0={2} /></Tool><Tool $w={23} $on><Bars rows={[W, N, W, N, W]} y0={4} /></Tool><Tool $w={22}><Bars rows={[W, N, W, N]} y0={8} /></Tool></Pill>
                <Pill><Tool $w={30} $gap={3}><Orient /><Down /></Tool></Pill>
              </Line>
              <Line $gap={4}>
                <Pill><Tool $w={22}><Bars rows={[W, L, W, L, W, L]} y0={2} /></Tool><Tool $w={23} $on><Bars rows={[W, N, W, N, W, N]} y0={2} /></Tool><Tool $w={22}><Bars rows={[W, R, W, R, W, R]} y0={2} /></Tool></Pill>
                <Pill><Tool $w={21}><Indent /></Tool><Tool $w={22}><Indent right /></Tool></Pill>
              </Line>
            </Column>
            <Rule />
            <Column $gap={7}>
              <SmallBtn><IconSlot $w={20}><Wrap /></IconSlot>Ajustar texto</SmallBtn>
              <SmallBtn><IconSlot $w={20}><Merge /></IconSlot>Combinar y centrar<Drop /></SmallBtn>
            </Column>
          </Group>
          <Group w={137} label="Número" pad="9px 0 0 3px" launch>
            <Column $gap={7}>
              <Combo $w={128}>Fecha<Down /></Combo>
              <Line $gap={4}>
                <Pill><Tool $w={33} $gap={10}><Glyph>$</Glyph><Down /></Tool><Tool $w={23}><Num $s={13}>%</Num></Tool><Tool $w={22}><Num $s={11}>000</Num></Tool></Pill>
                <Pill><Tool $w={21}><Decimal more /></Tool><Tool $w={21}><Decimal /></Tool></Pill>
              </Line>
            </Column>
          </Group>
          <Group w={703} label="Estilos" pad="0 0 0 2px">
            <Big w={73} ls={-0.05} icon={<CondIcon />} a="Formato" b="condicional" /><Big w={71} ls={-0.1} icon={<TableIcon />} a="Dar formato" b="como tabla" />
            <Gallery>
              <Swatches>
                <Swatch $sel>Normal</Swatch><Swatch $bg="#c6efce" $c="#006100">Buena</Swatch><Swatch $bg="#ffc7ce" $c="#9c0006">Incorrecto</Swatch>
                <Swatch $bg="#ffeb9c" $c="#9c6500">Neutral</Swatch><Swatch $bg="#f2f2f2" $c="#fa7d00" $b $line="#7f7f7f">Cálculo</Swatch>
                <Swatch $bg="#a5a5a5" $c="#fff" $b $check>Celda de co...</Swatch><Swatch $c="#fa7d00" $linked>Celda vincul...</Swatch>
                <Swatch $bg="#ffcc99" $c="#3f3f76" $line="#7f7f7f">Entrada</Swatch><Swatch $bg="#ffffcc" $line="#b2b2b2">Notas</Swatch>
                <Swatch $bg="#f2f2f2" $c="#3f3f3f" $b $line="#3f3f3f">Salida</Swatch>
              </Swatches>
              <GalleryScroll>
                <GalleryStep $off><Tri d="M0 3L2.500 0 5 3z" w={5} h={3} c="#a9adb3" /></GalleryStep><GalleryStep><Down /></GalleryStep>
                <GalleryStep><svg width="7" height="1"><path d="M0 .5h7" stroke="#567db1" /></svg><Down /></GalleryStep>
              </GalleryScroll>
            </Gallery>
          </Group>
          <Group w={147} label="Celdas" pad="0 0 0 3px">
            <Big w={43} ls={-0.3} icon={<InsertIcon />} a="Insertar" /><Big w={46} ls={-0.3} icon={<DeleteIcon />} a="Eliminar" /><Big w={48} ls={-0.2} icon={<FormatIcon />} a="Formato" />
          </Group>
          <Group w={216} label="Modificar" pad="0 0 0 7px">
            <Column $w={80}>
              <SmallBtn><IconSlot><Glyph $s={15}>Σ</Glyph></IconSlot>Autosuma<Drop /></SmallBtn>
              <SmallBtn><IconSlot><Fill /></IconSlot>Rellenar<Drop /></SmallBtn>
              <SmallBtn><IconSlot><Eraser /></IconSlot>Borrar<Drop /></SmallBtn>
            </Column>
            <Big w={56} ls={-0.2} icon={<SortIcon />} a="Ordenar" b="y filtrar" /><Big w={64} ls={-0.15} icon={<FindIcon />} a="Buscar y" b="seleccionar" />
          </Group>
        </Ribbon>
        <FormulaWrap>
          <FormulaBar>
            <NameBox><NameText>N18</NameText><Down c="#000" w={7} /></NameBox>
            <FxPill><FxDot /><Glyph $s={14} $i $c="#555">fx</Glyph></FxPill>
            <FormulaText>00/01/1900</FormulaText>
            <ExpandBtn><svg width="8" height="9" viewBox="0 0 8 9"><path d="M1 1l3 2.500L7 1M1 5l3 2.500L7 5" stroke="#000" strokeWidth="1.500" fill="none" /></svg></ExpandBtn>
          </FormulaBar>
        </FormulaWrap>
        <Work>
          <Sheet>
            <HeadRow>
              <Corner><svg width="8" height="8"><path d="M8 0v8H0z" fill="#e8f0fa" /></svg></Corner>
              {columns.map(([n, w]) => <ColHead key={n} $w={w}>{n}</ColHead>)}
            </HeadRow>
            <Row $h={8}><RowHead>7</RowHead><TopEdge /></Row>
            <Row $h={26}><RowHead>8</RowHead><Spacer />
              <Cell $w={724} $b $s={12.5} $ls={-0.45}>Seguimiento Conciliacion</Cell><Cell $w={75} $b $ls={-0.3}>Mes</Cell>
              <Cell $w={125} $b $bg="#e2efda" $ls={-0.3}>Abril</Cell><Cell $w={75} $b $ls={-0.3}>Año</Cell><Cell $w={75} $bg="#e2efda" $ls={-0.15}>2021</Cell>
            </Row>
            <Row $h={24}><RowHead>9</RowHead><Spacer />
              <HeadCell $w={232} $bg="#2f5597">Estacion</HeadCell><HeadCell $w={64} $bg="#203864">Cod</HeadCell>
              {dayWidths.map((w, i) => <HeadCell key={i} $w={w} $bg="#203864">{i + 1}</HeadCell>)}
            </Row>
            {stations.map(([name, cod, miss = []], r) => (
              <Row key={cod} $h={r === 8 ? 15 : 17}><RowHead>{r + 10}</RowHead><Spacer />
                <NameCell $w={232}>{name}</NameCell><BodyCell $w={64}>{cod}</BodyCell>
                {dayWidths.map((w, i) => <BodyCell key={i} $w={w}>{i < 14 && !miss.includes(i + 1) ? <Check /> : <Cross />}</BodyCell>)}
              </Row>
            ))}
            {Array.from({ length: 27 }, (_, i) => <Row key={i} $h={17}><RowHead>{i + 28}</RowHead></Row>)}
            {buttons.map(([t, x, y, w, h, s, ls]) => <SheetButton key={t} $x={x} $y={y} $w={w} $h={h} $s={s} $ls={ls}>{t}</SheetButton>)}
          </Sheet>
          <VScroll>
            <SplitV />
            <ArrowBoxV $h={16}><Tri d="M0 5L4.500 0 9 5z" /></ArrowBoxV>
            <ThumbV><Grip v /></ThumbV>
            <ArrowBoxV $h={17}><Tri d="M0 0h9L4.500 5z" /></ArrowBoxV>
          </VScroll>
        </Work>
        <Bottom>
          <NavButtons>
            <svg width="7" height="8"><path d="M0 0h1.500v8H0zM7 0v8L2 4z" fill="#1c4a94" /></svg>
            <svg width="5" height="8"><path d="M5 0v8L0 4z" fill="#1c4a94" /></svg>
            <svg width="5" height="8"><path d="M0 0v8l5-4z" fill="#1c4a94" /></svg>
            <svg width="7" height="8"><path d="M5.500 0H7v8H5.500zM0 0v8l5-4z" fill="#1c4a94" /></svg>
          </NavButtons>
          <SheetTabs>
            <TabShape width="210" height="15" viewBox="0 0 210 15">
              <path d="M158 14.500L171 .5h31L189 14.500z" fill="#c6daf5" stroke="#8fb1df" />
              <path d="M93 14.500L106 .5h62L155 14.500z" fill="#cfe0f7" stroke="#8fb1df" />
              <path d="M0 0h103L89 14.500H3Q1 8 0 0z" fill="#fff" />
            </TabShape>
            <SheetTab $w={88} $ml={9} $b>Seguimiento</SheetTab><SheetTab $w={66} $ml={8}>Reporte</SheetTab>
            <SheetTab $w={16}><svg width="15" height="14" viewBox="0 0 15 14"><path d="M4.500 3.500h9v8l-2 2h-5z" fill="#e7eef9" stroke="#6b84ac" /><path d="M4 0v7M.5 3.500h7M1.500 1l5 5M6.500 1l-5 5" stroke="#d98c1e" /></svg></SheetTab>
          </SheetTabs>
          <HScroll>
            <SplitH /><ArrowBoxH $w={19}><Tri d="M5 0v9L0 4.500z" w={5} h={9} /></ArrowBoxH>
            <ThumbH><Grip /></ThumbH>
            <ArrowBoxH $w={50} $end><Tri d="M0 0v9l5-4.500z" w={5} h={9} /></ArrowBoxH><SplitH />
          </HScroll>
        </Bottom>
        <StatusBar>
          <StatusText>Listo</StatusText>
          <StatusRight>
            <ViewGroup>
              <View $on><svg width="13" height="12"><path d="M.5.500h12v10.500H.5zM.5 4h12M.5 7.500h12M4.500.500v10.500M8.500.500v10.500" fill="#fff" stroke="#666" /></svg></View>
              <View><svg width="12" height="12"><path d="M.5.500h11v11H.5z" fill="#888" stroke="#555" /><path d="M3 2h6v8H3z" fill="#fff" /><path d="M4.500 4h3M4.500 6h3M4.500 8h3" stroke="#555" /></svg></View>
              <View><svg width="13" height="12"><path d="M.5.500h12v11H.5z" fill="#777" stroke="#555" /><path d="M1 1h4.500v6H1zM7 1h5v6H7z" fill="#fff" /></svg></View>
            </ViewGroup>
            <ZoomText>85%</ZoomText>
            <Zoomer />
          </StatusRight>
        </StatusBar>
        <Orb><OrbArt /></Orb>
      </Window>
    </>
  );
}
